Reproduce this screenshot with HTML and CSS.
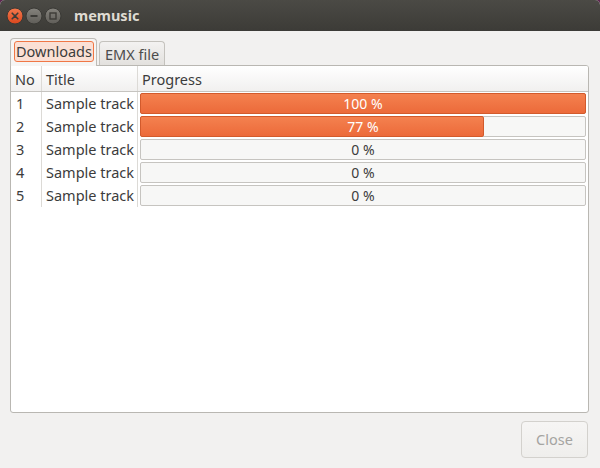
FILE: index.html
```html
<!DOCTYPE html>
<html>
<head>
<meta charset="utf-8">
<link rel="stylesheet" href="styles.css">
</head>
<body>
<div class="window">
  <div class="titlebar">
    <div class="wbtns">
      <svg class="wbtn" width="18" height="18" viewBox="0 0 18 18">
        <defs>
          <linearGradient id="gc" x1="0" y1="0" x2="0" y2="1">
            <stop offset="0" stop-color="#f57a4e"/>
            <stop offset="1" stop-color="#d9461d"/>
          </linearGradient>
          <linearGradient id="gg" x1="0" y1="0" x2="0" y2="1">
            <stop offset="0" stop-color="#85837d"/>
            <stop offset="1" stop-color="#5f5d58"/>
          </linearGradient>
        </defs>
        <circle cx="9" cy="9" r="8" fill="url(#gc)" stroke="#3a3935" stroke-width="1"/>
        <path d="M6.2 6.2 L11.8 11.8 M11.8 6.2 L6.2 11.8" stroke="#3c3b37" stroke-width="1.6" stroke-linecap="round"/>
      </svg>
      <svg class="wbtn" width="18" height="18" viewBox="0 0 18 18">
        <circle cx="9" cy="9" r="8" fill="url(#gg)" stroke="#3a3935" stroke-width="1"/>
        <path d="M5.5 9 H12.5" stroke="#3c3b37" stroke-width="1.8"/>
      </svg>
      <svg class="wbtn" width="18" height="18" viewBox="0 0 18 18">
        <circle cx="9" cy="9" r="8" fill="url(#gg)" stroke="#3a3935" stroke-width="1"/>
        <rect x="6" y="6" width="6" height="6" fill="none" stroke="#3c3b37" stroke-width="1.4"/>
      </svg>
    </div>
    <div class="wtitle">memusic</div>
  </div>

  <div class="content">
    <div class="tabs">
      <div class="tab active"><span class="tabfocus">Downloads</span></div>
      <div class="tab">EMX file</div>
    </div>
    <div class="frame">
      <div class="thead">
        <div class="c-no">No</div>
        <div class="c-title">Title</div>
        <div class="c-prog">Progress</div>
      </div>
      <div class="rows">
        <div class="row">
          <div class="c-no">1</div>
          <div class="c-title">Sample track</div>
          <div class="c-prog"><div class="bar"><div class="fill full"></div><span class="lbl on">100 %</span></div></div>
        </div>
        <div class="row">
          <div class="c-no">2</div>
          <div class="c-title">Sample track</div>
          <div class="c-prog"><div class="bar"><div class="fill" style="width:calc(77% + 2px)"></div><span class="lbl on">77 %</span></div></div>
        </div>
        <div class="row">
          <div class="c-no">3</div>
          <div class="c-title">Sample track</div>
          <div class="c-prog"><div class="bar"><span class="lbl">0 %</span></div></div>
        </div>
        <div class="row">
          <div class="c-no">4</div>
          <div class="c-title">Sample track</div>
          <div class="c-prog"><div class="bar"><span class="lbl">0 %</span></div></div>
        </div>
        <div class="row">
          <div class="c-no">5</div>
          <div class="c-title">Sample track</div>
          <div class="c-prog"><div class="bar"><span class="lbl">0 %</span></div></div>
        </div>
      </div>
    </div>
    <div class="actions">
      <button class="btn" disabled>Close</button>
    </div>
  </div>
</div>
</body>
</html>
```

FILE: styles.css
```css
html, body {
  margin: 0;
  padding: 0;
  background: #5e2750;
}
body {
  width: 600px;
  height: 468px;
  overflow: hidden;
  font-family: "Noto Sans", "Open Sans", sans-serif;
  font-size: 14.5px;
  color: #3c3c3c;
}
.window {
  width: 600px;
  height: 468px;
  background: #f2f1f0;
  border-radius: 5px 5px 0 0;
  overflow: hidden;
  display: flex;
  flex-direction: column;
}
.titlebar {
  height: 31px;
  flex: none;
  background: linear-gradient(#4b4a45, #3c3b37);
  display: flex;
  align-items: center;
  box-sizing: border-box;
  padding-left: 6px;
}
.wbtns {
  display: flex;
  gap: 1px;
  padding-top: 1px;
}
.wbtn {
  display: block;
}
.wtitle {
  margin-left: 12px;
  font-weight: bold;
  font-size: 14.5px;
  color: #dfdbd2;
  padding-bottom: 1px;
}
.content {
  flex: 1;
  display: flex;
  flex-direction: column;
  padding: 7px 11px 0 10px;
}
.tabs {
  display: flex;
  align-items: flex-end;
  height: 27px;
  gap: 2px;
  position: relative;
  z-index: 1;
}
.tab {
  box-sizing: border-box;
  height: 24px;
  padding: 0 5px;
  border: 1px solid #c4c2bd;
  border-bottom: none;
  border-radius: 4px 4px 0 0;
  background: linear-gradient(#f3f2f1, #e3e1de);
  color: #4c4c4c;
  display: flex;
  align-items: center;
}
.tab.active {
  height: 28px;
  margin-bottom: -1px;
  padding: 0 2px 0 3px;
  background: #f6f5f4;
  border-color: #bebcb7;
}
.tabfocus {
  display: block;
  box-sizing: border-box;
  height: 21px;
  line-height: 19px;
  padding: 0 1px;
  border: 1px solid #f07746;
  border-radius: 3px;
  background: #fbe0d5;
  color: #3c3c3c;
  margin-top: -2px;
}
.frame {
  box-sizing: border-box;
  height: 348px;
  background: #ffffff;
  border: 1px solid #b9b7b2;
  border-radius: 0 3px 3px 3px;
  overflow: hidden;
}
.thead {
  display: flex;
  height: 26px;
  box-sizing: border-box;
  background: linear-gradient(#ffffff, #f1f0ef);
  border-bottom: 1px solid #c6c4c0;
  align-items: stretch;
}
.thead > div {
  display: flex;
  align-items: center;
  color: #3c3c3c;
}
.c-no {
  width: 31px;
  flex: none;
  box-sizing: border-box;
  padding-left: 4px;
  border-right: 1px solid #dcdad6;
}
.c-title {
  width: 96px;
  flex: none;
  box-sizing: border-box;
  padding-left: 4px;
  border-right: 1px solid #dcdad6;
}
.c-prog {
  flex: 1;
  box-sizing: border-box;
  padding-left: 4px;
}
.row {
  display: flex;
  height: 23px;
}
.row .c-no, .row .c-title {
  display: flex;
  align-items: center;
  color: #3c3c3c;
  padding-bottom: 1px;
}
.row .c-no {
  padding-left: 5px;
}
.row .c-prog {
  padding: 1px 2px 1px 2px;
}
.bar {
  position: relative;
  box-sizing: border-box;
  height: 21px;
  background: #f7f7f6;
  border: 1px solid #c6c4c0;
  border-radius: 2px;
}
.fill {
  position: absolute;
  top: -1px;
  left: -1px;
  bottom: -1px;
  box-sizing: border-box;
  background: linear-gradient(#f4814f, #ec6a3a);
  border: 1px solid #d25a2c;
  border-radius: 2px;
}
.fill.full {
  right: -1px;
}
.lbl {
  position: absolute;
  inset: 0;
  display: flex;
  align-items: center;
  justify-content: center;
  font-size: 14px;
  color: #3c3c3c;
}
.lbl.on {
  color: #ffffff;
}
.actions {
  display: flex;
  justify-content: flex-end;
  padding-top: 8px;
}
.btn {
  box-sizing: border-box;
  width: 67px;
  height: 37px;
  border: 1px solid #d3d1cd;
  border-radius: 4px;
  background: linear-gradient(#f6f5f4, #efeeec);
  font-family: "Noto Sans", "Open Sans", sans-serif;
  font-size: 14.5px;
  color: #a5a4a1;
  padding: 0 0 1px 0;
  margin-right: 1px;
}
```
